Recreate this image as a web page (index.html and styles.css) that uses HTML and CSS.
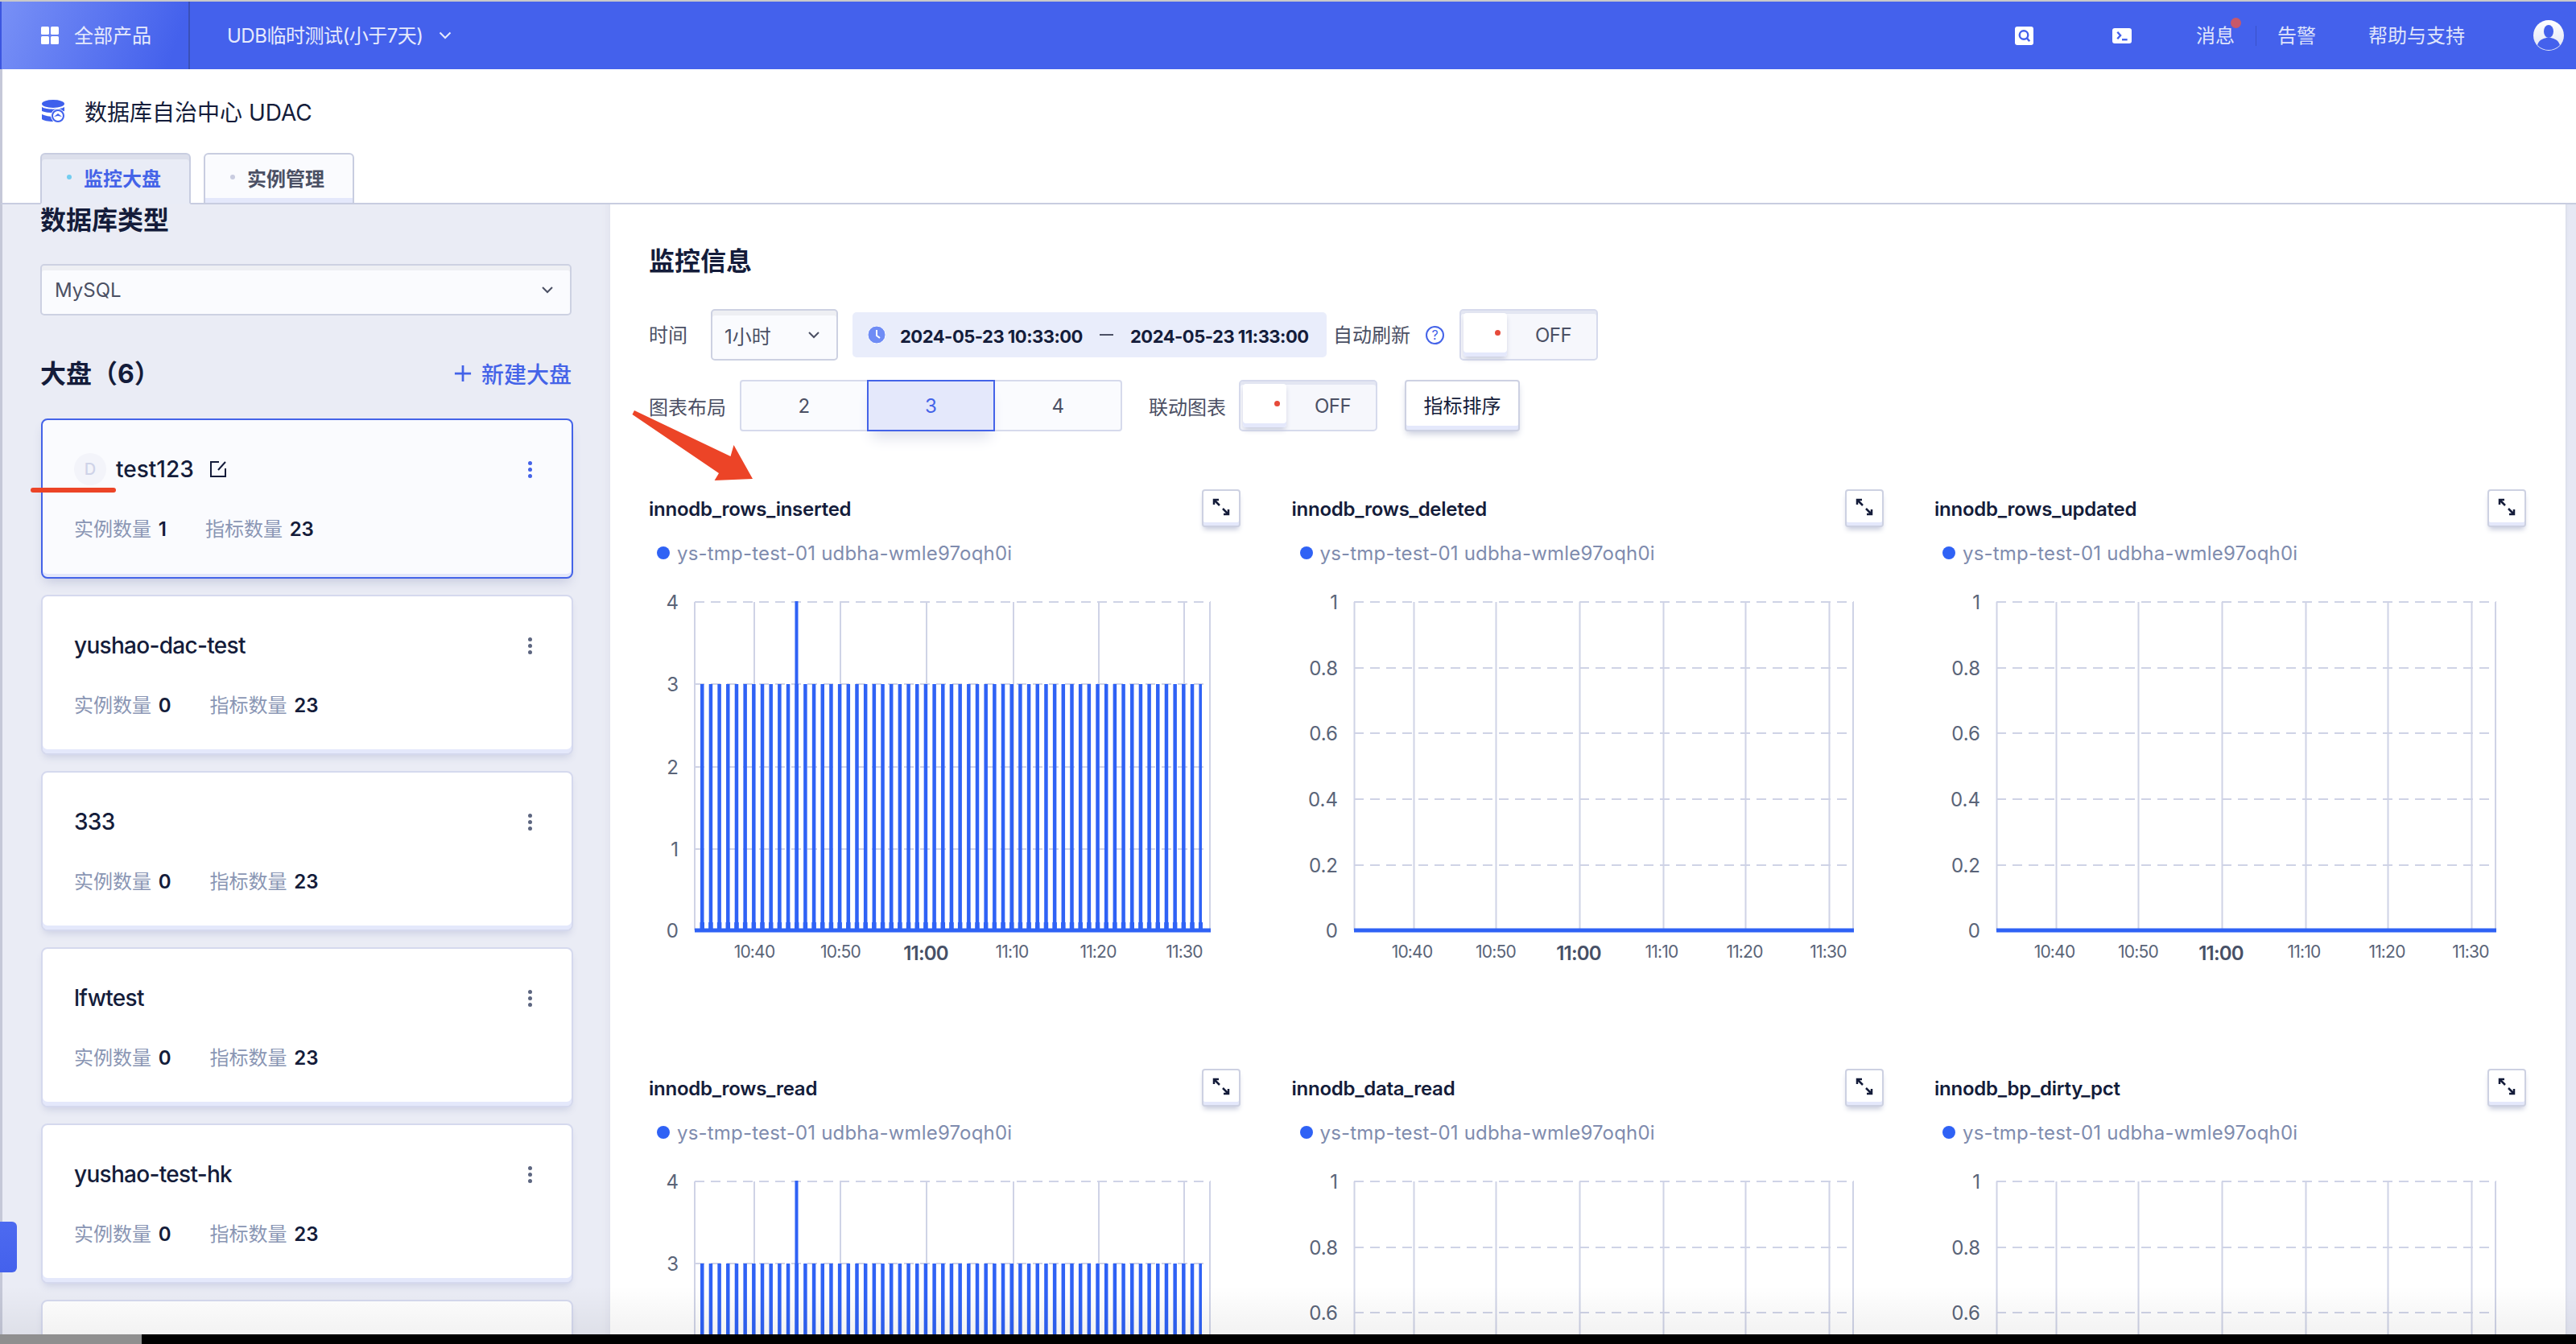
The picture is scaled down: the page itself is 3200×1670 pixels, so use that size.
FILE: index.html
```html
<!DOCTYPE html>
<html lang="zh-CN">
<head>
<meta charset="utf-8">
<title>数据库自治中心 UDAC</title>
<link rel="stylesheet" href="styles.css">
</head>
<body>
<div class="app">
  <header class="topbar">
    <div class="all-products">
      <svg class="grid-icon" viewBox="0 0 22 22"><rect width="10" height="10" rx="1.5"/><rect x="12" width="10" height="10" rx="1.5"/><rect y="12" width="10" height="10" rx="1.5"/><rect x="12" y="12" width="10" height="10" rx="1.5"/></svg>
      <span class="bar-text">全部产品</span>
    </div>
    <div class="project">
      <span class="bar-text">UDB临时测试(小于7天)</span>
      <svg class="chev-w" viewBox="0 0 16 10"><path d="M1.5 1.5 8 8l6.5-6.5"/></svg>
    </div>
    <nav class="topnav">
      <span class="square-icon square-search"><svg viewBox="0 0 24 24"><circle cx="11.5" cy="11" r="5.5"/><path d="m15.5 15 3.5 4"/></svg></span>
      <span class="square-icon square-term"><svg viewBox="0 0 24 20"><path d="m6 5 4 4.500-4 4.500"/><path d="M12 15h7"/></svg></span>
      <span class="nav-msg bar-text">消息<i class="msg-dot"></i></span>
      <i class="nav-sep"></i>
      <span class="nav-alert bar-text">告警</span>
      <span class="nav-help bar-text">帮助与支持</span>
      <svg class="avatar" viewBox="0 0 38 38"><defs><linearGradient id="av" x1="0" y1="0" x2="0" y2="1"><stop offset="0" stop-color="#fff"/><stop offset="1" stop-color="#dfe3f5"/></linearGradient></defs><circle cx="19" cy="19" r="19" fill="url(#av)"/><ellipse cx="19" cy="14" rx="6" ry="8" fill="#4461ec"/><path d="M5 31c2-7 8-8 11-9h6c3 1 9 2 11 9-8 8-20 8-28 0z" fill="#4461ec"/></svg>
    </nav>
  </header>

  <section class="subhead">
    <div class="product-title">
      <svg class="db-icon" viewBox="0 0 28 28"><ellipse cx="14" cy="5" rx="14" ry="5" fill="#3f60ec"/><path d="M0 9c5 3.500 23 3.500 28 0v5c-8 3-20 3-28 0z" fill="#3f60ec"/><path d="M0 18c4 2 10 3 14 3v6C8 27 2 26 0 24z" fill="#3f60ec"/><circle cx="20" cy="20" r="9" fill="#fff"/><circle cx="20" cy="20" r="7" fill="none" stroke="#3f60ec" stroke-width="2"/><path d="m15 21 5-4 5 4-5-1z" fill="#3f60ec"/></svg>
      <span>数据库自治中心 UDAC</span>
    </div>
    <div class="tabs">
      <div class="tab tab-on"><i class="tab-dot"></i>监控大盘</div>
      <div class="tab tab-off"><i class="tab-dot"></i>实例管理</div>
    </div>
  </section>

  <div class="workspace">
    <aside class="sidebar">
      <h2 class="side-h">数据库类型</h2>
      <div class="select db-select"><span>MySQL</span><svg class="chev" viewBox="0 0 16 10"><path d="M2 2l6 6 6-6"/></svg></div>
      <div class="board-head">
        <h2 class="side-h">大盘（6）</h2>
        <span class="new-board"><svg class="plus" viewBox="0 0 24 24"><path d="M12 1v22M1 12h22"/></svg>新建大盘</span>
      </div>
      <div class="card card-on">
        <div class="card-top">
          <i class="card-badge">D</i><span class="card-name">test123</span>
          <svg class="edit" viewBox="0 0 22 22"><path d="M12 2H2v18h18V10"/><path d="M11 12 20 2"/></svg>
          <i class="kebab"><b></b><b></b><b></b></i>
        </div>
        <div class="card-stats"><span class="stat-a">实例数量 <b>1</b></span><span>指标数量 <b>23</b></span></div>
      </div>
      <div class="card">
        <div class="card-top"><span class="card-name">yushao-dac-test</span><i class="kebab"><b></b><b></b><b></b></i></div>
        <div class="card-stats"><span class="stat-a">实例数量 <b>0</b></span><span>指标数量 <b>23</b></span></div>
      </div>
      <div class="card">
        <div class="card-top"><span class="card-name">333</span><i class="kebab"><b></b><b></b><b></b></i></div>
        <div class="card-stats"><span class="stat-a">实例数量 <b>0</b></span><span>指标数量 <b>23</b></span></div>
      </div>
      <div class="card">
        <div class="card-top"><span class="card-name">lfwtest</span><i class="kebab"><b></b><b></b><b></b></i></div>
        <div class="card-stats"><span class="stat-a">实例数量 <b>0</b></span><span>指标数量 <b>23</b></span></div>
      </div>
      <div class="card">
        <div class="card-top"><span class="card-name">yushao-test-hk</span><i class="kebab"><b></b><b></b><b></b></i></div>
        <div class="card-stats"><span class="stat-a">实例数量 <b>0</b></span><span>指标数量 <b>23</b></span></div>
      </div>
      <div class="card"></div>
    </aside>

    <main class="main">
      <h1 class="main-h">监控信息</h1>
      <div class="ctl-row">
        <span class="lbl lbl-up">时间</span>
        <div class="select time-select"><span>1小时</span><svg class="chev" viewBox="0 0 16 10"><path d="M2 2l6 6 6-6"/></svg></div>
        <div class="daterange">
          <svg class="clock" viewBox="0 0 22 22"><circle cx="11" cy="11" r="11"/><path d="M11 5v7l4 3"/></svg>
          <span class="date-text">2024-05-23 10:33:00</span><i class="date-dash"></i><span class="date-text">2024-05-23 11:33:00</span>
        </div>
        <span class="lbl lbl-up lbl-refresh">自动刷新</span>
        <i class="help">?</i>
        <div class="switch sw-refresh"><span class="knob"><i></i></span><span class="sw-text">OFF</span></div>
      </div>
      <div class="ctl-row">
        <span class="lbl">图表布局</span>
        <div class="segment"><span>2</span><span class="seg-on">3</span><span>4</span></div>
        <span class="lbl lbl-link">联动图表</span>
        <div class="switch"><span class="knob"><i></i></span><span class="sw-text">OFF</span></div>
        <button class="sort-btn">指标排序</button>
      </div>

      <div class="charts">
        <article class="chart">
          <div class="chart-head"><span class="chart-title">innodb_rows_inserted</span><button class="expand"><svg viewBox="0 0 24 24"><path d="M3 9V3h6M3 3l7 7M21 15v6h-6M21 21l-7-7"/></svg></button></div>
          <div class="legend"><i></i>ys-tmp-test-01 udbha-wmle97oqh0i</div>
          <svg class="plot" viewBox="0 0 735 480">
            <g class="h-grid"><path d="M57 18H698M57 120H698M57 223H698M57 325H698"/></g>
            <g class="v-grid"><path d="M57 18V426M131 18V426M238 18V426M345 18V426M453 18V426M559 18V426M665 18V426M697 18V426"/></g>
            <line class="bars" x1="64" y1="273" x2="687" y2="273" stroke-width="306"/>
            <line class="bars-foot" x1="63.500" y1="420" x2="688" y2="420" stroke-width="8"/>
            <line class="spike" x1="183.500" y1="17" x2="183.500" y2="426"/>
            <line class="base" x1="57" y1="426" x2="698" y2="426"/>
            <g class="ylab" text-anchor="end"><text x="37" y="27">4</text><text x="37" y="129">3</text><text x="37" y="232">2</text><text x="37" y="334">1</text><text x="37" y="435">0</text></g>
            <g class="xlab" text-anchor="middle"><text x="131" y="460">10:40</text><text x="238" y="460">10:50</text><text class="xstrong" x="344" y="463">11:00</text><text x="451" y="460">11:10</text><text x="558" y="460">11:20</text><text x="665" y="460">11:30</text></g>
          </svg>
        </article>
        <article class="chart">
          <div class="chart-head"><span class="chart-title">innodb_rows_deleted</span><button class="expand"><svg viewBox="0 0 24 24"><path d="M3 9V3h6M3 3l7 7M21 15v6h-6M21 21l-7-7"/></svg></button></div>
          <div class="legend"><i></i>ys-tmp-test-01 udbha-wmle97oqh0i</div>
          <svg class="plot" viewBox="0 0 735 480">
            <g class="h-grid"><path d="M77 18H698M77 100H698M77 181H698M77 263H698M77 345H698"/></g>
            <g class="v-grid"><path d="M77.500 18V426M151.500 18V426M253.500 18V426M357.500 18V426M461.500 18V426M563.500 18V426M667.500 18V426M697 18V426"/></g>
            <line class="base" x1="77" y1="426" x2="698" y2="426"/>
            <g class="ylab" text-anchor="end"><text x="57" y="27">1</text><text x="57" y="109">0.8</text><text x="57" y="190">0.6</text><text x="57" y="272">0.4</text><text x="57" y="354">0.2</text><text x="57" y="435">0</text></g>
            <g class="xlab" text-anchor="middle"><text x="149" y="460">10:40</text><text x="253" y="460">10:50</text><text class="xstrong" x="356" y="463">11:00</text><text x="459" y="460">11:10</text><text x="562" y="460">11:20</text><text x="666" y="460">11:30</text></g>
          </svg>
        </article>
        <article class="chart">
          <div class="chart-head"><span class="chart-title">innodb_rows_updated</span><button class="expand"><svg viewBox="0 0 24 24"><path d="M3 9V3h6M3 3l7 7M21 15v6h-6M21 21l-7-7"/></svg></button></div>
          <div class="legend"><i></i>ys-tmp-test-01 udbha-wmle97oqh0i</div>
          <svg class="plot" viewBox="0 0 735 480">
            <g class="h-grid"><path d="M77 18H698M77 100H698M77 181H698M77 263H698M77 345H698"/></g>
            <g class="v-grid"><path d="M77.500 18V426M151.500 18V426M253.500 18V426M357.500 18V426M461.500 18V426M563.500 18V426M667.500 18V426M697 18V426"/></g>
            <line class="base" x1="77" y1="426" x2="698" y2="426"/>
            <g class="ylab" text-anchor="end"><text x="57" y="27">1</text><text x="57" y="109">0.8</text><text x="57" y="190">0.6</text><text x="57" y="272">0.4</text><text x="57" y="354">0.2</text><text x="57" y="435">0</text></g>
            <g class="xlab" text-anchor="middle"><text x="149" y="460">10:40</text><text x="253" y="460">10:50</text><text class="xstrong" x="356" y="463">11:00</text><text x="459" y="460">11:10</text><text x="562" y="460">11:20</text><text x="666" y="460">11:30</text></g>
          </svg>
        </article>
        <article class="chart">
          <div class="chart-head"><span class="chart-title">innodb_rows_read</span><button class="expand"><svg viewBox="0 0 24 24"><path d="M3 9V3h6M3 3l7 7M21 15v6h-6M21 21l-7-7"/></svg></button></div>
          <div class="legend"><i></i>ys-tmp-test-01 udbha-wmle97oqh0i</div>
          <svg class="plot" viewBox="0 0 735 480">
            <g class="h-grid"><path d="M57 18H698M57 120H698M57 223H698M57 325H698"/></g>
            <g class="v-grid"><path d="M57 18V426M131 18V426M238 18V426M345 18V426M453 18V426M559 18V426M665 18V426M697 18V426"/></g>
            <line class="bars" x1="64" y1="273" x2="687" y2="273" stroke-width="306"/>
            <line class="spike" x1="183.500" y1="17" x2="183.500" y2="426"/>
            <g class="ylab" text-anchor="end"><text x="37" y="27">4</text><text x="37" y="129">3</text></g>
          </svg>
        </article>
        <article class="chart">
          <div class="chart-head"><span class="chart-title">innodb_data_read</span><button class="expand"><svg viewBox="0 0 24 24"><path d="M3 9V3h6M3 3l7 7M21 15v6h-6M21 21l-7-7"/></svg></button></div>
          <div class="legend"><i></i>ys-tmp-test-01 udbha-wmle97oqh0i</div>
          <svg class="plot" viewBox="0 0 735 480">
            <g class="h-grid"><path d="M77 18H698M77 100H698M77 181H698M77 263H698M77 345H698"/></g>
            <g class="v-grid"><path d="M77.500 18V426M151.500 18V426M253.500 18V426M357.500 18V426M461.500 18V426M563.500 18V426M667.500 18V426M697 18V426"/></g>
            <g class="ylab" text-anchor="end"><text x="57" y="27">1</text><text x="57" y="109">0.8</text><text x="57" y="190">0.6</text></g>
          </svg>
        </article>
        <article class="chart">
          <div class="chart-head"><span class="chart-title">innodb_bp_dirty_pct</span><button class="expand"><svg viewBox="0 0 24 24"><path d="M3 9V3h6M3 3l7 7M21 15v6h-6M21 21l-7-7"/></svg></button></div>
          <div class="legend"><i></i>ys-tmp-test-01 udbha-wmle97oqh0i</div>
          <svg class="plot" viewBox="0 0 735 480">
            <g class="h-grid"><path d="M77 18H698M77 100H698M77 181H698M77 263H698M77 345H698"/></g>
            <g class="v-grid"><path d="M77.500 18V426M151.500 18V426M253.500 18V426M357.500 18V426M461.500 18V426M563.500 18V426M667.500 18V426M697 18V426"/></g>
            <g class="ylab" text-anchor="end"><text x="57" y="27">1</text><text x="57" y="109">0.8</text><text x="57" y="190">0.6</text></g>
          </svg>
        </article>
      </div>
    </main>
    <div class="rail"></div>
  </div>
  <div class="scrollstrip"><i></i></div>

  <i class="side-handle"></i>
  <i class="fade"></i>
  <i class="mark-line"></i>
  <svg class="mark-arrow" viewBox="0 0 160 100"><path d="M3 0 122.500 57 126.500 43 150 85 102.600 87 108 78 0.500 5z"/></svg>
</div>
</body>
</html>
```
FILE: styles.css
```css
* { box-sizing: border-box; }
html, body { margin: 0; padding: 0; }
body {
  font-family: Inter, "Noto Sans CJK SC", sans-serif;
  font-size: 24px;
  color: #141c3a;
  background: #fff;
  overflow: hidden;
}
i { font-style: normal; }
h1, h2 { margin: 0; }
button { font: inherit; padding: 0; }

.app {
  position: relative;
  width: 3200px;
  height: 1670px;
  display: flex;
  flex-direction: column;
  overflow: hidden;
}

/* top bar */
.topbar {
  height: 86px;
  flex: none;
  border-top: 2px solid #c9c9c9;
  background: #4461ec;
  color: #e6eafc;
  display: flex;
  align-items: center;
}
.bar-text { margin-top: -3px; }
.all-products {
  width: 236px;
  height: 100%;
  padding-left: 51px;
  display: flex;
  align-items: center;
  gap: 19px;
  border-left: 2px solid #3c56e0;
  border-right: 2px solid #3a50b8;
  background: linear-gradient(110deg, #7890f6 0%, #4461ec 90%);
}
.grid-icon { width: 22px; height: 22px; margin-left: -2px; fill: #fff; }
.project {
  margin-left: 46px;
  display: flex;
  align-items: center;
  gap: 20px;
  letter-spacing: -0.5px;
}
.chev-w { width: 16px; height: 10px; fill: none; stroke: #e6eafc; stroke-width: 2; }
.topnav {
  margin-left: auto;
  height: 100%;
  display: flex;
  align-items: center;
}
.square-icon {
  display: block;
  background: #fff;
  border-radius: 3px;
}
.square-icon svg { display: block; width: 100%; height: 100%; fill: none; stroke: #4461ec; stroke-width: 2.500; }
.square-search { width: 23px; height: 23px; }
.square-term { width: 24px; height: 19px; margin-left: 98px; }
.nav-msg { position: relative; margin-left: 80px; color: #dfe4fb; }
.msg-dot {
  position: absolute;
  left: 43px;
  top: -3px;
  width: 13px;
  height: 13px;
  border-radius: 50%;
  background: #c8586a;
}
.nav-sep { width: 1px; height: 25px; margin-left: 26px; background: #3a52c8; }
.nav-alert { margin-left: 26px; color: #dfe4fb; }
.nav-help { margin-left: 65px; color: #dfe4fb; }
.avatar { width: 38px; height: 38px; margin-left: 85px; margin-right: 15px; }

/* sub header */
.subhead {
  height: 168px;
  flex: none;
  padding: 32px 0 0 50px;
  border-bottom: 2px solid #c8cde0;
  background: #fff;
  border-left: 3px solid #c5c8d8;
}
.product-title {
  height: 40px;
  display: flex;
  align-items: center;
  gap: 25px;
  font-size: 28px;
  margin-left: -1px;
}
.db-icon { width: 28px; height: 28px; }
.tabs {
  display: flex;
  gap: 16px;
  margin-top: 32px;
  margin-left: -3px;
}
.tab {
  width: 187px;
  height: 64px;
  padding: 0 0 4px 31px;
  display: flex;
  align-items: center;
  gap: 15px;
  font-weight: 600;
  border: 2px solid #c8cde0;
  border-radius: 6px 6px 0 0;
  color: #4b5064;
  background: #fafbfe;
  box-shadow: inset 0 -6px 0 #e4e8fb;
}
.tab-on {
  color: #4463e8;
  background: #e9ecf6;
  border-bottom-color: #e9ecf6;
  box-shadow: inset 0 6px 0 #dcdfeb;
  position: relative;
}
.tab-dot { width: 6px; height: 6px; border-radius: 50%; background: #c9cce0; }
.tab-on .tab-dot { background: #72cdf0; }

/* workspace */
.workspace {
  flex: 1;
  min-height: 0;
  display: flex;
}
.sidebar {
  width: 758px;
  flex: none;
  padding-left: 47px;
  padding-right: 46px;
  background: #eaecf5;
  border-left: 3px solid #c5c8d8;
  overflow: hidden;
  box-shadow: inset -12px 0 10px -10px #dfe1ec;
}
.side-h {
  font-size: 32px;
  line-height: 40px;
  font-weight: 700;
}
.select {
  display: flex;
  align-items: center;
  justify-content: space-between;
  height: 64px;
  border: 2px solid #cdd1e2;
  border-radius: 5px;
  background: #fafbfe;
  box-shadow: inset 0 6px 0 #eeeff3;
  color: #4b5064;
}
.db-select {
  margin-top: 34px;
  width: 660px;
  padding: 0 20px 0 16px;
}
.chev { width: 16px; height: 10px; fill: none; stroke: #4b5064; stroke-width: 2; }
.board-head {
  margin-top: 53px;
  width: 660px;
  display: flex;
  align-items: center;
  justify-content: space-between;
}
.new-board {
  display: flex;
  align-items: center;
  gap: 12px;
  margin-top: -2px;
  font-size: 28px;
  font-weight: 500;
  color: #4463e8;
}
.plus { width: 22px; height: 22px; fill: none; stroke: #4463e8; stroke-width: 3; }
.card {
  width: 661px;
  height: 199px;
  margin-top: 20px;
  margin-left: 1px;
  padding: 41px 49px 0 39px;
  border: 2px solid #d5d9ee;
  border-radius: 8px;
  background: #fff;
  box-shadow: inset 0 -5px 0 #e4e8fb, 0 6px 10px -3px #cdd1e4;
}
.card-on {
  margin-top: 35px;
  border-color: #4463e8;
  background: #fafbfe;
  box-shadow: inset 0 -4px 0 #e4e8fb, 0 8px 14px -4px #c5c9de;
}
.card-top {
  height: 40px;
  display: flex;
  align-items: center;
  font-size: 28px;
  font-weight: 500;
}
.card-name { letter-spacing: -0.7px; }
.card-on .card-name { letter-spacing: 0; }
.card-badge {
  width: 40px;
  height: 40px;
  margin-right: 12px;
  border-radius: 50%;
  background: #f3f4fa;
  color: #cfd3e8;
  font-size: 20px;
  display: flex;
  align-items: center;
  justify-content: center;
}
.edit { width: 22px; height: 22px; margin-left: 19px; fill: none; stroke: #141c3a; stroke-width: 2; }
.kebab {
  margin-left: auto;
  display: flex;
  flex-direction: column;
  gap: 3px;
}
.kebab b { width: 5px; height: 5px; border-radius: 50%; background: #5d6680; }
.card-on .kebab b { background: #4463e8; }
.card-stats {
  margin-top: 35px;
  display: flex;
  color: #8a96b4;
}
.card-stats b { color: #141c3a; font-weight: 600; margin-left: 2px; }
.stat-a { margin-right: 48px; }

/* main */
.main {
  flex: 1;
  min-width: 0;
  padding: 49px 49px 0 48px;
  overflow: hidden;
  background: #fff;
}
.rail { width: 13px; flex: none; background: #e6e8f4; box-shadow: inset 2px 0 3px -1px #d5d8e6; }
.main-h { font-size: 32px; line-height: 44px; font-weight: 700; }
.ctl-row {
  height: 64px;
  margin-top: 24px;
  display: flex;
  align-items: center;
  color: #4b5064;
}
.main-h + .ctl-row { margin-top: 37px; }
.lbl { white-space: nowrap; }
.lbl-up { margin-top: -3px; }
.time-select { width: 158px; margin-left: 29px; padding: 0 20px 0 15px; }
.daterange {
  width: 589px;
  height: 56px;
  margin-left: 18px;
  padding-left: 19px;
  display: flex;
  align-items: center;
  border-radius: 5px;
  background: #e9edfb;
  color: #141c3a;
  font-size: 22px;
  font-weight: 700;
  letter-spacing: -0.5px;
  white-space: nowrap;
}
.date-text { margin-top: 4px; }
.clock { width: 22px; height: 22px; margin-right: 18px; flex: none; fill: #6f8cf5; stroke: #fff; }
.clock path { fill: none; stroke-width: 2; }
.date-dash { width: 17px; height: 2px; margin: 0 21px; flex: none; background: #4b5064; }
.lbl-refresh { margin-left: 8px; }
.help {
  width: 23px;
  height: 23px;
  margin-left: 19px;
  border: 2px solid #4463e8;
  border-radius: 50%;
  color: #4463e8;
  font-size: 16px;
  line-height: 19px;
  text-align: center;
}
.switch {
  position: relative;
  width: 172px;
  height: 64px;
  margin-left: 16px;
  padding-left: 58px;
  display: flex;
  align-items: center;
  border: 2px solid #d6daec;
  border-radius: 5px;
  background: #f6f7fc;
  box-shadow: inset 0 4px 0 #e3e6f2;
}
.sw-refresh { margin-left: 19px; }
.knob {
  width: 54px;
  height: 54px;
  position: absolute;
  left: 3px;
  top: 3px;
  border-radius: 4px;
  background: #fff;
  box-shadow: inset 0 -5px 0 #e4e8fb, 0 4px 6px -1px #c7cbdc;
}
.knob i {
  position: absolute;
  right: 8px;
  top: 21px;
  width: 7px;
  height: 7px;
  border-radius: 50%;
  background: #e64a3a;
}
.sw-text { margin-left: 34px; letter-spacing: -0.5px; }
.segment {
  width: 475px;
  height: 64px;
  margin-left: 17px;
  display: flex;
  border: 2px solid #d6daec;
  border-radius: 4px;
  background: #fafbfe;
}
.segment span {
  flex: 1;
  display: flex;
  align-items: center;
  justify-content: center;
}
.segment .seg-on {
  margin: -2px 0;
  border: 2px solid #4463e8;
  background: #e4e8fb;
  color: #4463e8;
  box-shadow: 0 14px 18px -6px #dfe1ec;
}
.lbl-link { margin-left: 33px; }
.sort-btn {
  width: 143px;
  height: 64px;
  margin-left: 34px;
  padding-bottom: 4px;
  border: 2px solid #cdd1e2;
  border-radius: 4px;
  background: #fff;
  color: #141c3a;
  box-shadow: inset 0 -5px 0 #e4e8fb, 0 5px 8px -2px #c7cbdc;
}

/* charts */
.charts {
  margin-top: 72px;
  display: grid;
  grid-template-columns: repeat(3, 735px);
  column-gap: 63.500px;
  row-gap: 120px;
}
.chart { height: 600px; }
.chart-head {
  height: 47px;
  display: flex;
  align-items: center;
  justify-content: space-between;
}
.chart-title { font-weight: 600; margin-top: 2px; letter-spacing: -0.25px; }
.expand {
  width: 48px;
  height: 47px;
  border: 2px solid #cdd1e2;
  border-radius: 4px;
  background: #fff;
  box-shadow: inset 0 -4px 0 #e4e8fb, 0 5px 6px -2px #c7cbdc;
  display: flex;
  align-items: center;
  justify-content: center;
  padding-bottom: 4px;
}
.expand svg { width: 24px; height: 24px; fill: none; stroke: #141c3a; stroke-width: 2.500; }
.legend {
  margin-top: 16px;
  height: 32px;
  padding-left: 10px;
  display: flex;
  align-items: center;
  gap: 9px;
  color: #7f8cae;
  white-space: nowrap;
  letter-spacing: 0.2px;
}
.legend i { width: 16px; height: 16px; border-radius: 50%; background: #2f62f5; }
.plot { display: block; width: 735px; height: 480px; margin-top: 27px; overflow: visible; }
.h-grid path { fill: none; stroke: #cfd3e6; stroke-width: 2; stroke-dasharray: 12 8; }
.v-grid path { fill: none; stroke: #cfd3e6; stroke-width: 2; }
.bars { stroke: #2f62f5; stroke-dasharray: 4.500 6.180; }
.bars-foot { stroke: #2f62f5; stroke-dasharray: 5.500 5.180; }
.spike { stroke: #2f62f5; stroke-width: 4; }
.base { stroke: #2f62f5; stroke-width: 5; }
.ylab { font-size: 24px; fill: #5a6478; }
.xlab { font-size: 21px; fill: #5a6478; letter-spacing: -0.8px; }
.xlab .xstrong { font-size: 24px; font-weight: 600; fill: #475066; }

/* bottom */
.scrollstrip { height: 12px; flex: none; background: #000; }
.scrollstrip i { display: block; width: 176px; height: 100%; background: #8f8f8f; }

/* overlays */
.side-handle {
  position: absolute;
  left: 0;
  top: 1518px;
  width: 21px;
  height: 63px;
  border-radius: 0 6px 6px 0;
  background: linear-gradient(180deg, #4d6af0, #4461ec);
}
.fade {
  position: absolute;
  left: 0;
  right: 0;
  top: 1598px;
  height: 60px;
  background: linear-gradient(180deg, rgba(0,0,0,0), rgba(0,0,0,.05));
  pointer-events: none;
}
.mark-line {
  position: absolute;
  left: 38px;
  top: 606px;
  width: 106px;
  height: 6px;
  border-radius: 3px;
  background: #ec4427;
}
.mark-arrow {
  position: absolute;
  left: 785px;
  top: 510px;
  width: 160px;
  height: 100px;
  fill: #ec4427;
}
```
